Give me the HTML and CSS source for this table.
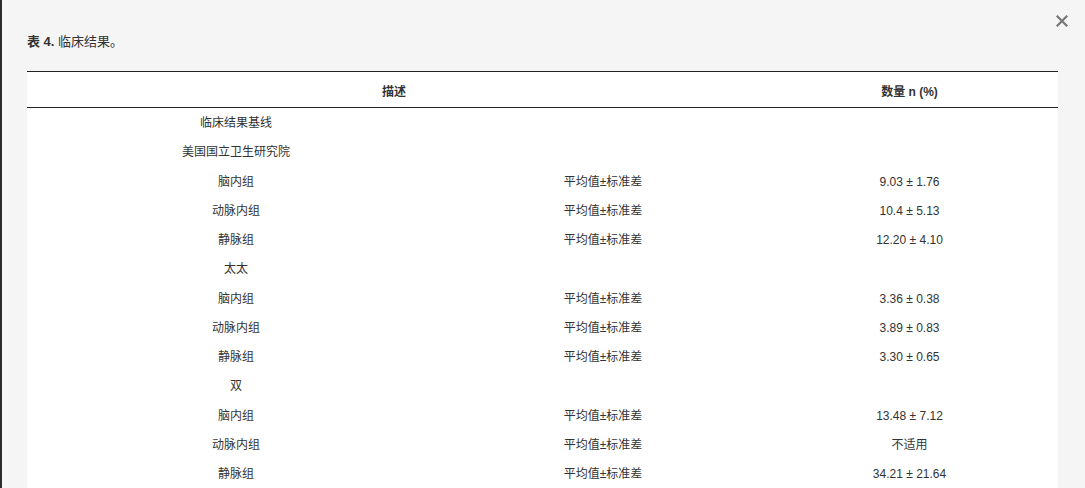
FILE: index.html
```html
<!DOCTYPE html>
<html lang="zh-CN">
<head>
    <meta charset="UTF-8">
    <meta name="viewport" content="width=device-width, initial-scale=1.0">
    <title>表 4. 临床结果</title>
    <link rel="stylesheet" href="styles.css">
</head>
<body>
    <div class="modal">
        <button class="close" aria-label="关闭">
            <svg width="12" height="12" viewBox="0 0 12 12"><path d="M1.5 1.5 L10.5 10.5 M10.5 1.5 L1.5 10.5" stroke="#777" stroke-width="2.2" stroke-linecap="square"/></svg>
        </button>
        <h3 class="caption"><b>表 4.</b> 临床结果。</h3>
        <table class="data-table">
            <colgroup>
                <col class="col-desc">
                <col class="col-stat">
                <col class="col-num">
            </colgroup>
            <thead>
                <tr>
                    <th colspan="2">描述</th>
                    <th>数量 n (%)</th>
                </tr>
            </thead>
            <tbody>
                <tr><td>临床结果基线</td><td></td><td></td></tr>
                <tr><td>美国国立卫生研究院</td><td></td><td></td></tr>
                <tr><td>脑内组</td><td>平均值±标准差</td><td>9.03 ± 1.76</td></tr>
                <tr><td>动脉内组</td><td>平均值±标准差</td><td>10.4 ± 5.13</td></tr>
                <tr><td>静脉组</td><td>平均值±标准差</td><td>12.20 ± 4.10</td></tr>
                <tr><td>太太</td><td></td><td></td></tr>
                <tr><td>脑内组</td><td>平均值±标准差</td><td>3.36 ± 0.38</td></tr>
                <tr><td>动脉内组</td><td>平均值±标准差</td><td>3.89 ± 0.83</td></tr>
                <tr><td>静脉组</td><td>平均值±标准差</td><td>3.30 ± 0.65</td></tr>
                <tr><td>双</td><td></td><td></td></tr>
                <tr><td>脑内组</td><td>平均值±标准差</td><td>13.48 ± 7.12</td></tr>
                <tr><td>动脉内组</td><td>平均值±标准差</td><td>不适用</td></tr>
                <tr><td>静脉组</td><td>平均值±标准差</td><td>34.21 ± 21.64</td></tr>
            </tbody>
        </table>
    </div>
</body>
</html>
```

FILE: styles.css
```css
html, body {
    margin: 0;
    padding: 0;
    background-color: #f5f5f5;
}

body {
    color: #333333;
    font-family: "Liberation Sans", "Noto Sans CJK SC", sans-serif;
    font-size: 12px;
    overflow: hidden;
}

.modal {
    position: relative;
    min-height: 488px;
    box-sizing: border-box;
    padding: 34px 27px 0 25px;
    border-left: 2px solid #2e2e2e;
}

.close {
    position: absolute;
    top: 14px;
    right: 16px;
    width: 14px;
    height: 14px;
    padding: 0;
    border: none;
    background: none;
    cursor: pointer;
    display: flex;
    align-items: center;
    justify-content: center;
}

.caption {
    margin: 0 0 21px 0;
    font-size: 13px;
    font-weight: normal;
    line-height: 16px;
}

.caption b {
    font-weight: bold;
}

.data-table {
    width: 1031px;
    border-collapse: collapse;
    background-color: #ffffff;
    border-top: 1px solid #222222;
}

.col-desc {
    width: 418px;
}

.col-stat {
    width: 316px;
}

.col-num {
    width: 297px;
}

.data-table th {
    font-weight: bold;
    text-align: center;
    padding: 12px 0 6px 0;
    line-height: 17px;
    border-bottom: 1px solid #222222;
}

.data-table td {
    text-align: center;
    padding: 7px 0 5px 0;
    line-height: 17.25px;
}
```
